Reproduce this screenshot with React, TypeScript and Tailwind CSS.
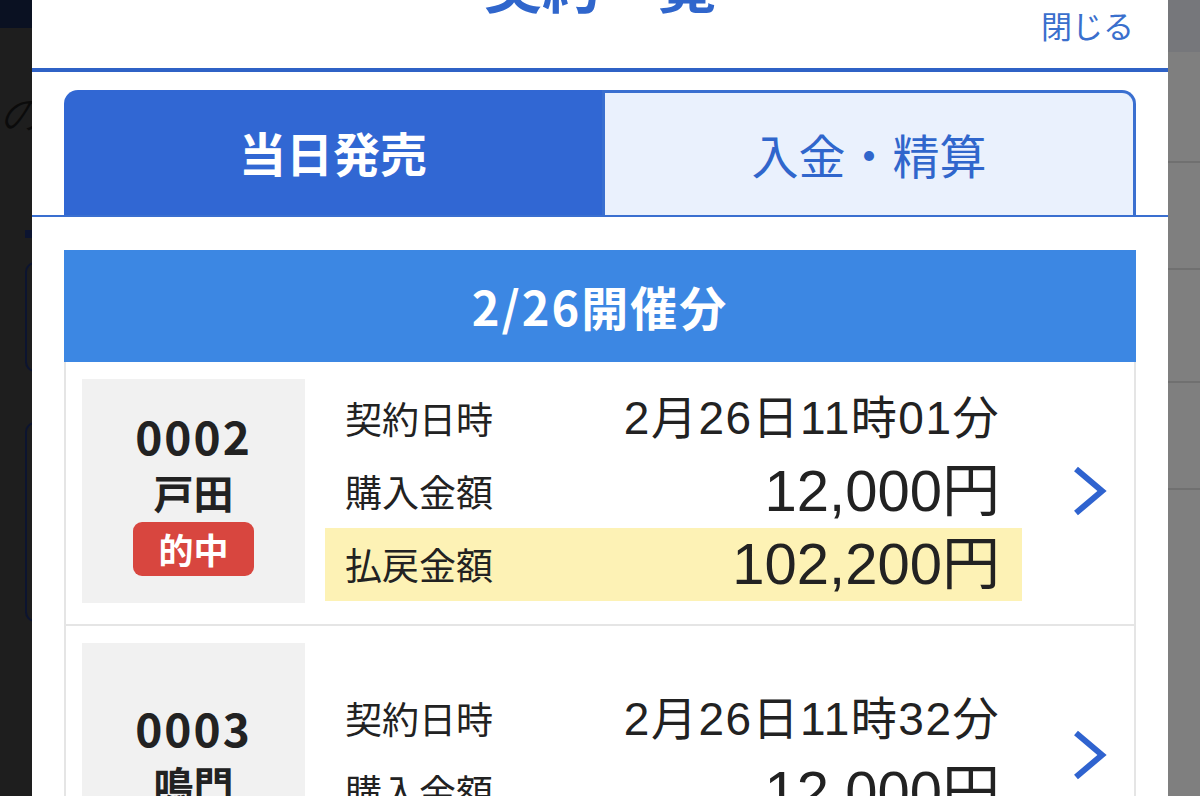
import React from "react";

type Contract = {
  no: string;
  place: string;
  hit?: boolean;
  date: string;
  amount: string;
  payout?: string;
};

const contracts: Contract[] = [
  {
    no: "0002",
    place: "戸田",
    hit: true,
    date: "2月26日11時01分",
    amount: "12,000円",
    payout: "102,200円",
  },
  {
    no: "0003",
    place: "鳴門",
    date: "2月26日11時32分",
    amount: "12,000円",
  },
];

const jp = "font-['Noto_Sans_CJK_JP',sans-serif]";
const num = "font-['Liberation_Sans','Noto_Sans_CJK_JP',sans-serif]";

function Chevron() {
  return (
    <svg width="36" height="52" viewBox="0 0 36 52" fill="none">
      <polyline
        points="5,4 31,26 5,48"
        stroke="#2f63cf"
        strokeWidth="6"
        strokeLinejoin="miter"
      />
    </svg>
  );
}

function Row({
  label,
  value,
  big,
  highlight,
}: {
  label: string;
  value: string;
  big?: boolean;
  highlight?: boolean;
}) {
  return (
    <div
      className={
        "flex h-[73px] items-center justify-between pl-[20px] pr-[22px] " +
        (highlight ? "bg-[#fdf2b5]" : "")
      }
    >
      <span className={`${jp} text-[37px] leading-none text-[#222]`}>{label}</span>
      <span
        className={
          big
            ? `${num} text-[58px] leading-none text-[#222]`
            : `${num} text-[46px] leading-none tracking-[1.5px] text-[#222]`
        }
      >
        {value}
      </span>
    </div>
  );
}

function ContractCard({ c }: { c: Contract }) {
  return (
    <div className="flex border-2 border-t-0 border-[#e5e5e5] bg-white pt-[17px] pb-[21px] pl-[16px]">
      <div className="flex min-h-[224px] w-[223px] shrink-0 flex-col items-center justify-center bg-[#f1f1f1]">
        <div className={`${jp} text-[46px] font-bold leading-[58px] tracking-[2px] text-[#222]`}>
          {c.no}
        </div>
        <div className={`${jp} text-[40px] font-bold leading-[56px] text-[#222]`}>{c.place}</div>
        {c.hit && (
          <div
            className={`${jp} mt-[2px] flex h-[54px] w-[121px] items-center justify-center rounded-[9px] bg-[#d8463f] text-[35px] font-bold text-white`}
          >
            的中
          </div>
        )}
      </div>
      <div className="flex flex-1 flex-col justify-center pl-[20px]">
        <Row label="契約日時" value={c.date} />
        <Row label="購入金額" value={c.amount} big />
        {c.payout && <Row label="払戻金額" value={c.payout} big highlight />}
      </div>
      <div className="flex w-[112px] shrink-0 items-center justify-center pl-[22px]">
        <Chevron />
      </div>
    </div>
  );
}

export default function App() {
  return (
    <div className="flex h-[796px] w-[1200px] overflow-hidden bg-[#1f1f1f]">
      {/* dimmed page behind the sheet */}
      <div className="relative w-[32px] shrink-0 overflow-hidden bg-[#1e1e1e]">
        <div className="h-[28px] bg-[#0a1122]" />
        <div className="ml-[2px] mt-[66px] font-['Liberation_Serif',serif] text-[40px] italic leading-none text-[#0b0b0b]">
          の
        </div>
        <div className="mt-[96px] ml-[25px] h-[8px] w-[7px] bg-[#0c1430]" />
        <div className="mt-[24px] ml-[25px] h-[110px] w-[20px] rounded-l-[10px] border-2 border-[#0c1430]" />
        <div className="mt-[50px] ml-[25px] h-[200px] w-[20px] rounded-l-[10px] border-2 border-[#0c1430]" />
      </div>

      <div className="flex w-[1136px] shrink-0 flex-col bg-white">
        <div className="relative h-[68px] shrink-0 overflow-hidden">
          <div
            className={`${jp} absolute left-0 right-0 top-[-60px] text-center text-[58px] font-bold text-[#3066cc]`}
          >
            契約一覧
          </div>
          <div className={`${jp} absolute right-[34px] top-[2px] text-[31px] text-[#3a6fcd]`}>
            閉じる
          </div>
        </div>
        <div className="h-[4px] shrink-0 bg-[#2f62c6]" />

        <div className="flex shrink-0 px-[32px] pt-[18px]">
          <div
            className={`${jp} flex h-[125px] w-[538px] items-center justify-center rounded-tl-[14px] bg-[#3167d3] text-[47px] font-bold text-white`}
          >
            当日発売
          </div>
          <div
            className={`${jp} flex h-[125px] flex-1 items-center justify-center rounded-tr-[14px] border-[3px] border-b-0 border-[#3a6fd0] bg-[#eaf1fd] text-[47px] text-[#3066cc]`}
          >
            入金・精算
          </div>
        </div>
        <div className="h-[2px] shrink-0 bg-[#3a6fd0]" />

        <div className="px-[32px] pt-[33px]">
          <div
            className={`${jp} flex h-[112px] items-center justify-center bg-[#3c87e3] text-[47px] font-bold tracking-[2px] text-white`}
          >
            2/26開催分
          </div>
          {contracts.map((c) => (
            <ContractCard key={c.no} c={c} />
          ))}
        </div>
      </div>

      <div className="w-[32px] shrink-0 bg-[#7f7f7f]">
        <div className="h-[52px] bg-[#76777b]" />
        <div className="h-[111px] border-b-2 border-[#707070]" />
        <div className="h-[107px] border-b-2 border-[#707070]" />
        <div className="h-[113px] border-b-2 border-[#707070]" />
        <div className="h-[107px] border-b-2 border-[#707070]" />
      </div>
    </div>
  );
}
